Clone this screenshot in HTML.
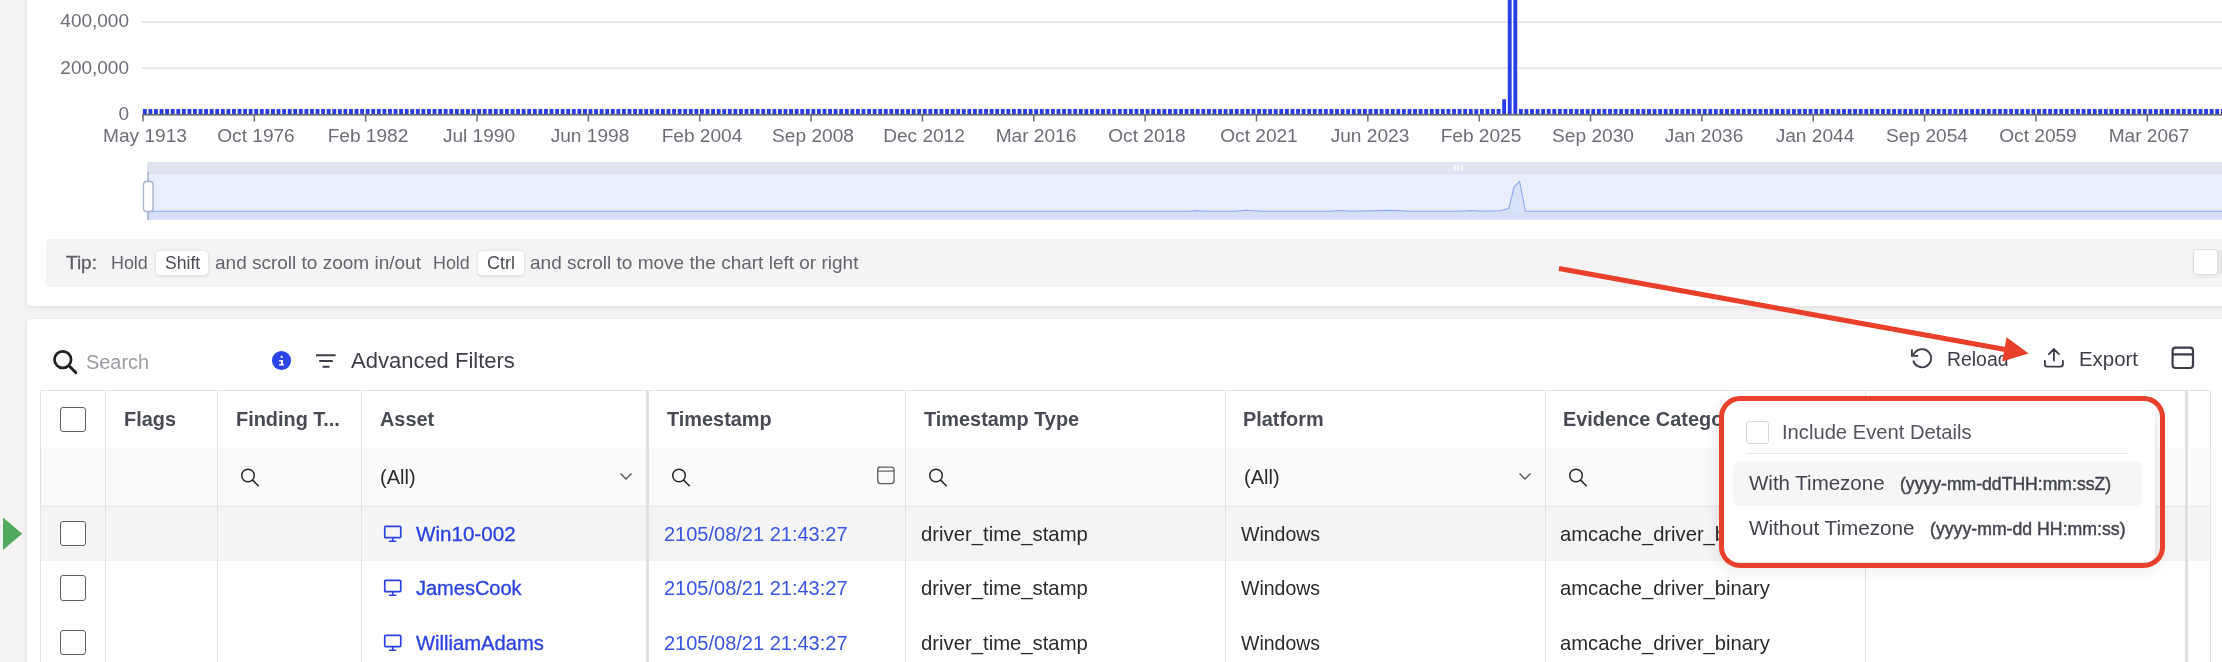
<!DOCTYPE html>
<html><head><meta charset="utf-8">
<style>
html,body{margin:0;padding:0;}
html{width:2222px;height:662px;overflow:hidden;background:#f3f3f3;}
body{width:2222px;height:662px;overflow:hidden;position:relative;background:#f3f3f3;font-family:"Liberation Sans",sans-serif;}
.abs{position:absolute;}
.yl,.xl,.tt,.th,.td,.abs{will-change:transform;}
.card{position:absolute;background:#fff;border-radius:4px;box-shadow:0 2px 6px rgba(0,0,0,0.08);}
.yl{position:absolute;width:100px;text-align:right;font-size:19px;color:#6c6f77;line-height:20px;}
.xl{position:absolute;top:125px;width:120px;text-align:center;font-size:19.1px;color:#6c6f77;line-height:22px;white-space:nowrap;}
.tip{position:absolute;left:46px;top:239px;width:2200px;height:48px;background:#f4f4f5;border-radius:4px;}
.tt{position:absolute;top:0;line-height:48px;font-size:19px;color:#62656c;white-space:nowrap;}
.kbd{position:absolute;top:10.5px;height:26.5px;background:#fff;border-radius:5px;box-sizing:border-box;border:1px solid #e8e8e8;box-shadow:0 1px 2px rgba(0,0,0,0.10);}
.th{position:absolute;top:391px;height:57px;line-height:57px;font-size:19.9px;font-weight:bold;color:#484b53;white-space:nowrap;}
.vb{position:absolute;width:1px;background:#e2e2e2;}
.cb{position:absolute;width:25.6px;height:25.4px;box-sizing:border-box;border:1.5px solid #5f5f5f;border-radius:3px;background:#fff;}
.td{position:absolute;font-size:20px;color:#2a2a2a;white-space:nowrap;line-height:24px;}
.lnk{color:#2941e2;-webkit-text-stroke:0.3px #2941e2;}
.ts{color:#3b55e3;}
</style></head><body><div id="root" style="position:absolute;left:0;top:0;width:2222px;height:662px;overflow:hidden;">
<!-- chart card -->
<div class="card" style="left:27px;top:-20px;width:2240px;height:326px;"></div>
<div class="yl" style="left:28.5px;top:11px;">400,000</div>
<div class="yl" style="left:28.5px;top:58px;">200,000</div>
<div class="yl" style="left:28.5px;top:104px;">0</div>
<svg class="abs" style="left:0;top:0" width="2222" height="160">
<rect x="142" y="21.5" width="2080" height="1.3" fill="#dcdcdc"/>
<rect x="142" y="67.5" width="2080" height="1.3" fill="#dcdcdc"/>
<g fill="#2a3de6"><rect x="142.90" y="109.00" width="3.85" height="5"/><rect x="148.47" y="109.00" width="3.85" height="5"/><rect x="154.04" y="109.00" width="3.85" height="5"/><rect x="159.61" y="109.00" width="3.85" height="5"/><rect x="165.18" y="109.00" width="3.85" height="5"/><rect x="170.75" y="109.00" width="3.85" height="5"/><rect x="176.33" y="109.00" width="3.85" height="5"/><rect x="181.90" y="109.00" width="3.85" height="5"/><rect x="187.47" y="109.00" width="3.85" height="5"/><rect x="193.04" y="109.00" width="3.85" height="5"/><rect x="198.61" y="109.00" width="3.85" height="5"/><rect x="204.18" y="109.00" width="3.85" height="5"/><rect x="209.75" y="109.00" width="3.85" height="5"/><rect x="215.32" y="109.00" width="3.85" height="5"/><rect x="220.89" y="109.00" width="3.85" height="5"/><rect x="226.47" y="109.00" width="3.85" height="5"/><rect x="232.04" y="109.00" width="3.85" height="5"/><rect x="237.61" y="109.00" width="3.85" height="5"/><rect x="243.18" y="109.00" width="3.85" height="5"/><rect x="248.75" y="109.00" width="3.85" height="5"/><rect x="254.32" y="109.00" width="3.85" height="5"/><rect x="259.89" y="109.00" width="3.85" height="5"/><rect x="265.46" y="109.00" width="3.85" height="5"/><rect x="271.03" y="109.00" width="3.85" height="5"/><rect x="276.60" y="109.00" width="3.85" height="5"/><rect x="282.18" y="109.00" width="3.85" height="5"/><rect x="287.75" y="109.00" width="3.85" height="5"/><rect x="293.32" y="109.00" width="3.85" height="5"/><rect x="298.89" y="109.00" width="3.85" height="5"/><rect x="304.46" y="109.00" width="3.85" height="5"/><rect x="310.03" y="109.00" width="3.85" height="5"/><rect x="315.60" y="109.00" width="3.85" height="5"/><rect x="321.17" y="109.00" width="3.85" height="5"/><rect x="326.74" y="109.00" width="3.85" height="5"/><rect x="332.31" y="109.00" width="3.85" height="5"/><rect x="337.88" y="109.00" width="3.85" height="5"/><rect x="343.46" y="109.00" width="3.85" height="5"/><rect x="349.03" y="109.00" width="3.85" height="5"/><rect x="354.60" y="109.00" width="3.85" height="5"/><rect x="360.17" y="109.00" width="3.85" height="5"/><rect x="365.74" y="109.00" width="3.85" height="5"/><rect x="371.31" y="109.00" width="3.85" height="5"/><rect x="376.88" y="109.00" width="3.85" height="5"/><rect x="382.45" y="109.00" width="3.85" height="5"/><rect x="388.02" y="109.00" width="3.85" height="5"/><rect x="393.60" y="109.00" width="3.85" height="5"/><rect x="399.17" y="109.00" width="3.85" height="5"/><rect x="404.74" y="109.00" width="3.85" height="5"/><rect x="410.31" y="109.00" width="3.85" height="5"/><rect x="415.88" y="109.00" width="3.85" height="5"/><rect x="421.45" y="109.00" width="3.85" height="5"/><rect x="427.02" y="109.00" width="3.85" height="5"/><rect x="432.59" y="109.00" width="3.85" height="5"/><rect x="438.16" y="109.00" width="3.85" height="5"/><rect x="443.73" y="109.00" width="3.85" height="5"/><rect x="449.30" y="109.00" width="3.85" height="5"/><rect x="454.88" y="109.00" width="3.85" height="5"/><rect x="460.45" y="109.00" width="3.85" height="5"/><rect x="466.02" y="109.00" width="3.85" height="5"/><rect x="471.59" y="109.00" width="3.85" height="5"/><rect x="477.16" y="109.00" width="3.85" height="5"/><rect x="482.73" y="109.00" width="3.85" height="5"/><rect x="488.30" y="109.00" width="3.85" height="5"/><rect x="493.87" y="109.00" width="3.85" height="5"/><rect x="499.44" y="109.00" width="3.85" height="5"/><rect x="505.01" y="109.00" width="3.85" height="5"/><rect x="510.59" y="109.00" width="3.85" height="5"/><rect x="516.16" y="109.00" width="3.85" height="5"/><rect x="521.73" y="109.00" width="3.85" height="5"/><rect x="527.30" y="109.00" width="3.85" height="5"/><rect x="532.87" y="109.00" width="3.85" height="5"/><rect x="538.44" y="109.00" width="3.85" height="5"/><rect x="544.01" y="109.00" width="3.85" height="5"/><rect x="549.58" y="109.00" width="3.85" height="5"/><rect x="555.15" y="109.00" width="3.85" height="5"/><rect x="560.73" y="109.00" width="3.85" height="5"/><rect x="566.30" y="109.00" width="3.85" height="5"/><rect x="571.87" y="109.00" width="3.85" height="5"/><rect x="577.44" y="109.00" width="3.85" height="5"/><rect x="583.01" y="109.00" width="3.85" height="5"/><rect x="588.58" y="109.00" width="3.85" height="5"/><rect x="594.15" y="109.00" width="3.85" height="5"/><rect x="599.72" y="109.00" width="3.85" height="5"/><rect x="605.29" y="109.00" width="3.85" height="5"/><rect x="610.86" y="109.00" width="3.85" height="5"/><rect x="616.43" y="109.00" width="3.85" height="5"/><rect x="622.01" y="109.00" width="3.85" height="5"/><rect x="627.58" y="109.00" width="3.85" height="5"/><rect x="633.15" y="109.00" width="3.85" height="5"/><rect x="638.72" y="109.00" width="3.85" height="5"/><rect x="644.29" y="109.00" width="3.85" height="5"/><rect x="649.86" y="109.00" width="3.85" height="5"/><rect x="655.43" y="109.00" width="3.85" height="5"/><rect x="661.00" y="109.00" width="3.85" height="5"/><rect x="666.57" y="109.00" width="3.85" height="5"/><rect x="672.14" y="109.00" width="3.85" height="5"/><rect x="677.72" y="109.00" width="3.85" height="5"/><rect x="683.29" y="109.00" width="3.85" height="5"/><rect x="688.86" y="109.00" width="3.85" height="5"/><rect x="694.43" y="109.00" width="3.85" height="5"/><rect x="700.00" y="109.00" width="3.85" height="5"/><rect x="705.57" y="109.00" width="3.85" height="5"/><rect x="711.14" y="109.00" width="3.85" height="5"/><rect x="716.71" y="109.00" width="3.85" height="5"/><rect x="722.28" y="109.00" width="3.85" height="5"/><rect x="727.85" y="109.00" width="3.85" height="5"/><rect x="733.43" y="109.00" width="3.85" height="5"/><rect x="739.00" y="109.00" width="3.85" height="5"/><rect x="744.57" y="109.00" width="3.85" height="5"/><rect x="750.14" y="109.00" width="3.85" height="5"/><rect x="755.71" y="109.00" width="3.85" height="5"/><rect x="761.28" y="109.00" width="3.85" height="5"/><rect x="766.85" y="109.00" width="3.85" height="5"/><rect x="772.42" y="109.00" width="3.85" height="5"/><rect x="777.99" y="109.00" width="3.85" height="5"/><rect x="783.56" y="109.00" width="3.85" height="5"/><rect x="789.14" y="109.00" width="3.85" height="5"/><rect x="794.71" y="109.00" width="3.85" height="5"/><rect x="800.28" y="109.00" width="3.85" height="5"/><rect x="805.85" y="109.00" width="3.85" height="5"/><rect x="811.42" y="109.00" width="3.85" height="5"/><rect x="816.99" y="109.00" width="3.85" height="5"/><rect x="822.56" y="109.00" width="3.85" height="5"/><rect x="828.13" y="109.00" width="3.85" height="5"/><rect x="833.70" y="109.00" width="3.85" height="5"/><rect x="839.27" y="109.00" width="3.85" height="5"/><rect x="844.85" y="109.00" width="3.85" height="5"/><rect x="850.42" y="109.00" width="3.85" height="5"/><rect x="855.99" y="109.00" width="3.85" height="5"/><rect x="861.56" y="109.00" width="3.85" height="5"/><rect x="867.13" y="109.00" width="3.85" height="5"/><rect x="872.70" y="109.00" width="3.85" height="5"/><rect x="878.27" y="109.00" width="3.85" height="5"/><rect x="883.84" y="109.00" width="3.85" height="5"/><rect x="889.41" y="109.00" width="3.85" height="5"/><rect x="894.98" y="109.00" width="3.85" height="5"/><rect x="900.56" y="109.00" width="3.85" height="5"/><rect x="906.13" y="109.00" width="3.85" height="5"/><rect x="911.70" y="109.00" width="3.85" height="5"/><rect x="917.27" y="109.00" width="3.85" height="5"/><rect x="922.84" y="109.00" width="3.85" height="5"/><rect x="928.41" y="109.00" width="3.85" height="5"/><rect x="933.98" y="109.00" width="3.85" height="5"/><rect x="939.55" y="109.00" width="3.85" height="5"/><rect x="945.12" y="109.00" width="3.85" height="5"/><rect x="950.69" y="109.00" width="3.85" height="5"/><rect x="956.27" y="109.00" width="3.85" height="5"/><rect x="961.84" y="109.00" width="3.85" height="5"/><rect x="967.41" y="109.00" width="3.85" height="5"/><rect x="972.98" y="109.00" width="3.85" height="5"/><rect x="978.55" y="109.00" width="3.85" height="5"/><rect x="984.12" y="109.00" width="3.85" height="5"/><rect x="989.69" y="109.00" width="3.85" height="5"/><rect x="995.26" y="109.00" width="3.85" height="5"/><rect x="1000.83" y="109.00" width="3.85" height="5"/><rect x="1006.40" y="109.00" width="3.85" height="5"/><rect x="1011.98" y="109.00" width="3.85" height="5"/><rect x="1017.55" y="109.00" width="3.85" height="5"/><rect x="1023.12" y="109.00" width="3.85" height="5"/><rect x="1028.69" y="109.00" width="3.85" height="5"/><rect x="1034.26" y="109.00" width="3.85" height="5"/><rect x="1039.83" y="109.00" width="3.85" height="5"/><rect x="1045.40" y="109.00" width="3.85" height="5"/><rect x="1050.97" y="109.00" width="3.85" height="5"/><rect x="1056.54" y="109.00" width="3.85" height="5"/><rect x="1062.12" y="109.00" width="3.85" height="5"/><rect x="1067.69" y="109.00" width="3.85" height="5"/><rect x="1073.26" y="109.00" width="3.85" height="5"/><rect x="1078.83" y="109.00" width="3.85" height="5"/><rect x="1084.40" y="109.00" width="3.85" height="5"/><rect x="1089.97" y="109.00" width="3.85" height="5"/><rect x="1095.54" y="109.00" width="3.85" height="5"/><rect x="1101.11" y="109.00" width="3.85" height="5"/><rect x="1106.68" y="109.00" width="3.85" height="5"/><rect x="1112.25" y="109.00" width="3.85" height="5"/><rect x="1117.83" y="109.00" width="3.85" height="5"/><rect x="1123.40" y="109.00" width="3.85" height="5"/><rect x="1128.97" y="109.00" width="3.85" height="5"/><rect x="1134.54" y="109.00" width="3.85" height="5"/><rect x="1140.11" y="109.00" width="3.85" height="5"/><rect x="1145.68" y="109.00" width="3.85" height="5"/><rect x="1151.25" y="109.00" width="3.85" height="5"/><rect x="1156.82" y="109.00" width="3.85" height="5"/><rect x="1162.39" y="109.00" width="3.85" height="5"/><rect x="1167.96" y="109.00" width="3.85" height="5"/><rect x="1173.54" y="109.00" width="3.85" height="5"/><rect x="1179.11" y="109.00" width="3.85" height="5"/><rect x="1184.68" y="109.00" width="3.85" height="5"/><rect x="1190.25" y="109.00" width="3.85" height="5"/><rect x="1195.82" y="109.00" width="3.85" height="5"/><rect x="1201.39" y="109.00" width="3.85" height="5"/><rect x="1206.96" y="109.00" width="3.85" height="5"/><rect x="1212.53" y="109.00" width="3.85" height="5"/><rect x="1218.10" y="109.00" width="3.85" height="5"/><rect x="1223.67" y="109.00" width="3.85" height="5"/><rect x="1229.25" y="109.00" width="3.85" height="5"/><rect x="1234.82" y="109.00" width="3.85" height="5"/><rect x="1240.39" y="109.00" width="3.85" height="5"/><rect x="1245.96" y="109.00" width="3.85" height="5"/><rect x="1251.53" y="109.00" width="3.85" height="5"/><rect x="1257.10" y="109.00" width="3.85" height="5"/><rect x="1262.67" y="109.00" width="3.85" height="5"/><rect x="1268.24" y="109.00" width="3.85" height="5"/><rect x="1273.81" y="109.00" width="3.85" height="5"/><rect x="1279.38" y="109.00" width="3.85" height="5"/><rect x="1284.95" y="109.00" width="3.85" height="5"/><rect x="1290.53" y="109.00" width="3.85" height="5"/><rect x="1296.10" y="109.00" width="3.85" height="5"/><rect x="1301.67" y="109.00" width="3.85" height="5"/><rect x="1307.24" y="109.00" width="3.85" height="5"/><rect x="1312.81" y="109.00" width="3.85" height="5"/><rect x="1318.38" y="109.00" width="3.85" height="5"/><rect x="1323.95" y="109.00" width="3.85" height="5"/><rect x="1329.52" y="109.00" width="3.85" height="5"/><rect x="1335.09" y="109.00" width="3.85" height="5"/><rect x="1340.66" y="109.00" width="3.85" height="5"/><rect x="1346.24" y="109.00" width="3.85" height="5"/><rect x="1351.81" y="109.00" width="3.85" height="5"/><rect x="1357.38" y="109.00" width="3.85" height="5"/><rect x="1362.95" y="109.00" width="3.85" height="5"/><rect x="1368.52" y="109.00" width="3.85" height="5"/><rect x="1374.09" y="109.00" width="3.85" height="5"/><rect x="1379.66" y="109.00" width="3.85" height="5"/><rect x="1385.23" y="109.00" width="3.85" height="5"/><rect x="1390.80" y="109.00" width="3.85" height="5"/><rect x="1396.38" y="109.00" width="3.85" height="5"/><rect x="1401.95" y="109.00" width="3.85" height="5"/><rect x="1407.52" y="109.00" width="3.85" height="5"/><rect x="1413.09" y="109.00" width="3.85" height="5"/><rect x="1418.66" y="109.00" width="3.85" height="5"/><rect x="1424.23" y="109.00" width="3.85" height="5"/><rect x="1429.80" y="109.00" width="3.85" height="5"/><rect x="1435.37" y="109.00" width="3.85" height="5"/><rect x="1440.94" y="109.00" width="3.85" height="5"/><rect x="1446.51" y="109.00" width="3.85" height="5"/><rect x="1452.09" y="109.00" width="3.85" height="5"/><rect x="1457.66" y="109.00" width="3.85" height="5"/><rect x="1463.23" y="109.00" width="3.85" height="5"/><rect x="1468.80" y="109.00" width="3.85" height="5"/><rect x="1474.37" y="109.00" width="3.85" height="5"/><rect x="1479.94" y="109.00" width="3.85" height="5"/><rect x="1485.51" y="109.00" width="3.85" height="5"/><rect x="1491.08" y="109.00" width="3.85" height="5"/><rect x="1496.65" y="109.00" width="3.85" height="5"/><rect x="1502.22" y="99.30" width="3.85" height="14.7"/><rect x="1507.80" y="-16.00" width="3.85" height="130"/><rect x="1513.37" y="-16.00" width="3.85" height="130"/><rect x="1518.94" y="109.00" width="3.85" height="5"/><rect x="1524.51" y="109.00" width="3.85" height="5"/><rect x="1530.08" y="109.00" width="3.85" height="5"/><rect x="1535.65" y="109.00" width="3.85" height="5"/><rect x="1541.22" y="109.00" width="3.85" height="5"/><rect x="1546.79" y="109.00" width="3.85" height="5"/><rect x="1552.36" y="109.00" width="3.85" height="5"/><rect x="1557.93" y="109.00" width="3.85" height="5"/><rect x="1563.51" y="109.00" width="3.85" height="5"/><rect x="1569.08" y="109.00" width="3.85" height="5"/><rect x="1574.65" y="109.00" width="3.85" height="5"/><rect x="1580.22" y="109.00" width="3.85" height="5"/><rect x="1585.79" y="109.00" width="3.85" height="5"/><rect x="1591.36" y="109.00" width="3.85" height="5"/><rect x="1596.93" y="109.00" width="3.85" height="5"/><rect x="1602.50" y="109.00" width="3.85" height="5"/><rect x="1608.07" y="109.00" width="3.85" height="5"/><rect x="1613.64" y="109.00" width="3.85" height="5"/><rect x="1619.21" y="109.00" width="3.85" height="5"/><rect x="1624.79" y="109.00" width="3.85" height="5"/><rect x="1630.36" y="109.00" width="3.85" height="5"/><rect x="1635.93" y="109.00" width="3.85" height="5"/><rect x="1641.50" y="109.00" width="3.85" height="5"/><rect x="1647.07" y="109.00" width="3.85" height="5"/><rect x="1652.64" y="109.00" width="3.85" height="5"/><rect x="1658.21" y="109.00" width="3.85" height="5"/><rect x="1663.78" y="109.00" width="3.85" height="5"/><rect x="1669.35" y="109.00" width="3.85" height="5"/><rect x="1674.92" y="109.00" width="3.85" height="5"/><rect x="1680.50" y="109.00" width="3.85" height="5"/><rect x="1686.07" y="109.00" width="3.85" height="5"/><rect x="1691.64" y="109.00" width="3.85" height="5"/><rect x="1697.21" y="109.00" width="3.85" height="5"/><rect x="1702.78" y="109.00" width="3.85" height="5"/><rect x="1708.35" y="109.00" width="3.85" height="5"/><rect x="1713.92" y="109.00" width="3.85" height="5"/><rect x="1719.49" y="109.00" width="3.85" height="5"/><rect x="1725.06" y="109.00" width="3.85" height="5"/><rect x="1730.63" y="109.00" width="3.85" height="5"/><rect x="1736.21" y="109.00" width="3.85" height="5"/><rect x="1741.78" y="109.00" width="3.85" height="5"/><rect x="1747.35" y="109.00" width="3.85" height="5"/><rect x="1752.92" y="109.00" width="3.85" height="5"/><rect x="1758.49" y="109.00" width="3.85" height="5"/><rect x="1764.06" y="109.00" width="3.85" height="5"/><rect x="1769.63" y="109.00" width="3.85" height="5"/><rect x="1775.20" y="109.00" width="3.85" height="5"/><rect x="1780.77" y="109.00" width="3.85" height="5"/><rect x="1786.35" y="109.00" width="3.85" height="5"/><rect x="1791.92" y="109.00" width="3.85" height="5"/><rect x="1797.49" y="109.00" width="3.85" height="5"/><rect x="1803.06" y="109.00" width="3.85" height="5"/><rect x="1808.63" y="109.00" width="3.85" height="5"/><rect x="1814.20" y="109.00" width="3.85" height="5"/><rect x="1819.77" y="109.00" width="3.85" height="5"/><rect x="1825.34" y="109.00" width="3.85" height="5"/><rect x="1830.91" y="109.00" width="3.85" height="5"/><rect x="1836.48" y="109.00" width="3.85" height="5"/><rect x="1842.06" y="109.00" width="3.85" height="5"/><rect x="1847.63" y="109.00" width="3.85" height="5"/><rect x="1853.20" y="109.00" width="3.85" height="5"/><rect x="1858.77" y="109.00" width="3.85" height="5"/><rect x="1864.34" y="109.00" width="3.85" height="5"/><rect x="1869.91" y="109.00" width="3.85" height="5"/><rect x="1875.48" y="109.00" width="3.85" height="5"/><rect x="1881.05" y="109.00" width="3.85" height="5"/><rect x="1886.62" y="109.00" width="3.85" height="5"/><rect x="1892.19" y="109.00" width="3.85" height="5"/><rect x="1897.77" y="109.00" width="3.85" height="5"/><rect x="1903.34" y="109.00" width="3.85" height="5"/><rect x="1908.91" y="109.00" width="3.85" height="5"/><rect x="1914.48" y="109.00" width="3.85" height="5"/><rect x="1920.05" y="109.00" width="3.85" height="5"/><rect x="1925.62" y="109.00" width="3.85" height="5"/><rect x="1931.19" y="109.00" width="3.85" height="5"/><rect x="1936.76" y="109.00" width="3.85" height="5"/><rect x="1942.33" y="109.00" width="3.85" height="5"/><rect x="1947.90" y="109.00" width="3.85" height="5"/><rect x="1953.47" y="109.00" width="3.85" height="5"/><rect x="1959.05" y="109.00" width="3.85" height="5"/><rect x="1964.62" y="109.00" width="3.85" height="5"/><rect x="1970.19" y="109.00" width="3.85" height="5"/><rect x="1975.76" y="109.00" width="3.85" height="5"/><rect x="1981.33" y="109.00" width="3.85" height="5"/><rect x="1986.90" y="109.00" width="3.85" height="5"/><rect x="1992.47" y="109.00" width="3.85" height="5"/><rect x="1998.04" y="109.00" width="3.85" height="5"/><rect x="2003.61" y="109.00" width="3.85" height="5"/><rect x="2009.18" y="109.00" width="3.85" height="5"/><rect x="2014.76" y="109.00" width="3.85" height="5"/><rect x="2020.33" y="109.00" width="3.85" height="5"/><rect x="2025.90" y="109.00" width="3.85" height="5"/><rect x="2031.47" y="109.00" width="3.85" height="5"/><rect x="2037.04" y="109.00" width="3.85" height="5"/><rect x="2042.61" y="109.00" width="3.85" height="5"/><rect x="2048.18" y="109.00" width="3.85" height="5"/><rect x="2053.75" y="109.00" width="3.85" height="5"/><rect x="2059.32" y="109.00" width="3.85" height="5"/><rect x="2064.89" y="109.00" width="3.85" height="5"/><rect x="2070.47" y="109.00" width="3.85" height="5"/><rect x="2076.04" y="109.00" width="3.85" height="5"/><rect x="2081.61" y="109.00" width="3.85" height="5"/><rect x="2087.18" y="109.00" width="3.85" height="5"/><rect x="2092.75" y="109.00" width="3.85" height="5"/><rect x="2098.32" y="109.00" width="3.85" height="5"/><rect x="2103.89" y="109.00" width="3.85" height="5"/><rect x="2109.46" y="109.00" width="3.85" height="5"/><rect x="2115.03" y="109.00" width="3.85" height="5"/><rect x="2120.61" y="109.00" width="3.85" height="5"/><rect x="2126.18" y="109.00" width="3.85" height="5"/><rect x="2131.75" y="109.00" width="3.85" height="5"/><rect x="2137.32" y="109.00" width="3.85" height="5"/><rect x="2142.89" y="109.00" width="3.85" height="5"/><rect x="2148.46" y="109.00" width="3.85" height="5"/><rect x="2154.03" y="109.00" width="3.85" height="5"/><rect x="2159.60" y="109.00" width="3.85" height="5"/><rect x="2165.17" y="109.00" width="3.85" height="5"/><rect x="2170.74" y="109.00" width="3.85" height="5"/><rect x="2176.32" y="109.00" width="3.85" height="5"/><rect x="2181.89" y="109.00" width="3.85" height="5"/><rect x="2187.46" y="109.00" width="3.85" height="5"/><rect x="2193.03" y="109.00" width="3.85" height="5"/><rect x="2198.60" y="109.00" width="3.85" height="5"/><rect x="2204.17" y="109.00" width="3.85" height="5"/><rect x="2209.74" y="109.00" width="3.85" height="5"/><rect x="2215.31" y="109.00" width="3.85" height="5"/><rect x="2220.88" y="109.00" width="3.85" height="5"/></g>
<rect x="142" y="114" width="2080" height="1.6" fill="#6b6e75"/>
<g fill="#6b6e75"><rect x="142.25" y="114" width="1.5" height="7.5"/><rect x="253.60" y="114" width="1.5" height="7.5"/><rect x="364.95" y="114" width="1.5" height="7.5"/><rect x="476.30" y="114" width="1.5" height="7.5"/><rect x="587.65" y="114" width="1.5" height="7.5"/><rect x="699.00" y="114" width="1.5" height="7.5"/><rect x="810.35" y="114" width="1.5" height="7.5"/><rect x="921.70" y="114" width="1.5" height="7.5"/><rect x="1033.05" y="114" width="1.5" height="7.5"/><rect x="1144.40" y="114" width="1.5" height="7.5"/><rect x="1255.75" y="114" width="1.5" height="7.5"/><rect x="1367.10" y="114" width="1.5" height="7.5"/><rect x="1478.45" y="114" width="1.5" height="7.5"/><rect x="1589.80" y="114" width="1.5" height="7.5"/><rect x="1701.15" y="114" width="1.5" height="7.5"/><rect x="1812.50" y="114" width="1.5" height="7.5"/><rect x="1923.85" y="114" width="1.5" height="7.5"/><rect x="2035.20" y="114" width="1.5" height="7.5"/><rect x="2146.55" y="114" width="1.5" height="7.5"/></g>
</svg>
<div class="xl" style="left:85.00px">May 1913</div><div class="xl" style="left:196.35px">Oct 1976</div><div class="xl" style="left:307.70px">Feb 1982</div><div class="xl" style="left:419.05px">Jul 1990</div><div class="xl" style="left:530.40px">Jun 1998</div><div class="xl" style="left:641.75px">Feb 2004</div><div class="xl" style="left:753.10px">Sep 2008</div><div class="xl" style="left:864.45px">Dec 2012</div><div class="xl" style="left:975.80px">Mar 2016</div><div class="xl" style="left:1087.15px">Oct 2018</div><div class="xl" style="left:1198.50px">Oct 2021</div><div class="xl" style="left:1309.85px">Jun 2023</div><div class="xl" style="left:1421.20px">Feb 2025</div><div class="xl" style="left:1532.55px">Sep 2030</div><div class="xl" style="left:1643.90px">Jan 2036</div><div class="xl" style="left:1755.25px">Jan 2044</div><div class="xl" style="left:1866.60px">Sep 2054</div><div class="xl" style="left:1977.95px">Oct 2059</div><div class="xl" style="left:2089.30px">Mar 2067</div>
<!-- navigator -->
<svg class="abs" style="left:0;top:150px" width="2222" height="80">
<rect x="147" y="12" width="2080" height="11.2" fill="#dfe4f0" rx="2"/>
<rect x="147" y="23" width="2080" height="1.3" fill="#d5dbe9"/>
<rect x="147" y="24.3" width="2080" height="37" fill="#e8eefd"/>
<rect x="147" y="61" width="2080" height="8.8" fill="#d7e0f8"/>
<path d="M147 61.2 L1190 61.2 L1196 60.6 L1204 61.2 L1236 61.2 L1246 60.2 L1262 61.2 L1330 61.2 L1340 60.5 L1352 61.2 L1390 60.4 L1410 61.2 L1460 61.2 L1470 60.5 L1484 61.2 L1500 60.8 L1508.8 58.5 L1514.2 36.9 L1519.6 31.5 L1525.4 61.2 L2222 61.2" fill="#d9e2fa" stroke="#8fa9f3" stroke-width="1.1"/>
<rect x="147.3" y="22" width="1.5" height="48" fill="#a7b3cc"/>
<rect x="143.5" y="31.5" width="9.5" height="30" rx="3" fill="#fff" stroke="#a7b3cc" stroke-width="1.3"/>
<g fill="#fff"><rect x="1454" y="15.3" width="1.6" height="5"/><rect x="1457.5" y="15.3" width="1.6" height="5"/><rect x="1461" y="15.3" width="1.6" height="5"/></g>
</svg>
<!-- tip -->
<div class="tip">
 <div class="tt" style="left:20px;color:#5d6067;-webkit-text-stroke:0.35px #5d6067;">Tip:</div>
 <div class="tt" style="left:64.5px;font-size:17.9px;">Hold</div>
 <div class="kbd" style="left:108.5px;width:54.5px;"></div>
 <div class="tt" style="left:118.5px;color:#4a4d54;font-size:17.6px;">Shift</div>
 <div class="tt" style="left:169px;">and scroll to zoom in/out</div>
 <div class="tt" style="left:387px;font-size:17.9px;">Hold</div>
 <div class="kbd" style="left:431px;width:47.5px;"></div>
 <div class="tt" style="left:441px;color:#4a4d54;font-size:18px;">Ctrl</div>
 <div class="tt" style="left:484px;">and scroll to move the chart left or right</div>
 <div class="kbd" style="left:2147px;width:25px;height:25.5px;top:10px;box-sizing:border-box;border:1px solid #dedede;box-shadow:0 2px 4px rgba(0,0,0,0.06);border-radius:4px;"></div><div class="abs" style="left:2172px;top:11px;width:10px;height:24px;background:#e6e6e6;"></div>
</div>
<!-- table card -->
<div class="card" style="left:27px;top:319px;width:2240px;height:400px;"></div>
<!-- toolbar -->
<svg class="abs" style="left:50px;top:346px" width="32" height="32" viewBox="0 0 32 32"><circle cx="12.8" cy="13.6" r="8.3" fill="none" stroke="#222" stroke-width="2.7"/><path d="M19 19.8 L25.8 26.6" stroke="#222" stroke-width="2.9" stroke-linecap="round"/></svg>
<div class="abs" style="left:86px;top:350px;font-size:19.9px;color:#9b9da3;line-height:24px;">Search</div>
<svg class="abs" style="left:271px;top:350px" width="21" height="21" viewBox="0 0 21 21"><circle cx="10.5" cy="10.5" r="9.6" fill="#2c46ea"/><circle cx="10.6" cy="6.9" r="1.15" fill="#fff"/><path d="M8.1 9.9 H12 V14.1 H12.9 V15.5 H8.1 V14.1 H10 V11.6 H8.1Z" fill="#fff"/></svg>
<svg class="abs" style="left:314px;top:352px" width="24" height="18" viewBox="0 0 24 18"><path d="M2 3.3 H21.6 M5.2 9 H18.8 M8.6 14.8 H15.5" stroke="#3b3e46" stroke-width="2" /></svg>
<div class="abs" style="left:351px;top:349px;font-size:22px;color:#3c3f48;line-height:24px;">Advanced Filters</div>

<svg class="abs" style="left:1908px;top:345px" width="26" height="26" viewBox="0 0 26 26"><path d="M5.2 15.4 A9.1 9.1 0 1 0 7.2 7.2 L4.6 10.4" fill="none" stroke="#3c3f48" stroke-width="1.9"/><path d="M3.9 4.6 V10.9 H10.2" fill="none" stroke="#3c3f48" stroke-width="1.9"/></svg>
<div class="abs" style="left:1947px;top:347px;font-size:19.4px;color:#3c3f48;line-height:24px;">Reload</div>
<svg class="abs" style="left:2042px;top:346px" width="24" height="24" viewBox="0 0 24 24"><path d="M11.9 14.6 V3.2 M6.9 8.2 L11.9 3.0 L16.9 8.2 M2.9 15 V18.2 Q2.9 20.6 5.3 20.6 H18.5 Q20.9 20.6 20.9 18.2 V15" fill="none" stroke="#3c3f48" stroke-width="1.85" stroke-linecap="round"/></svg>
<div class="abs" style="left:2079px;top:347px;font-size:20.4px;color:#3c3f48;line-height:24px;">Export</div>
<svg class="abs" style="left:2170px;top:345px" width="26" height="26" viewBox="0 0 26 26"><rect x="2.6" y="2.6" width="20.4" height="20.4" rx="3" fill="none" stroke="#3c3f48" stroke-width="2.2"/><path d="M2.6 9.4 H23" stroke="#3c3f48" stroke-width="2.3"/></svg>

<!-- table -->
<div class="abs" style="left:40px;top:390px;width:2171px;height:300px;border:1px solid #e2e2e2;border-bottom:none;box-sizing:border-box;background:#fff;"></div>
<div class="abs" style="left:41px;top:448px;width:2169px;height:58px;background:#fafafa;"></div>
<div class="abs" style="left:41px;top:506px;width:2169px;height:1px;background:#e4e6ea;"></div>
<div class="abs" style="left:41px;top:507px;width:2169px;height:54px;background:#f4f4f4;"></div>
<div class="vb" style="left:105px;top:391px;height:280px;"></div>
<div class="vb" style="left:217px;top:391px;height:280px;"></div>
<div class="vb" style="left:361px;top:391px;height:280px;"></div>
<div class="abs" style="left:646px;top:391px;width:3px;height:280px;background:#e0e0e0;"></div>
<div class="vb" style="left:905px;top:391px;height:280px;"></div>
<div class="vb" style="left:1225px;top:391px;height:280px;"></div>
<div class="vb" style="left:1545px;top:391px;height:280px;"></div>
<div class="vb" style="left:1865px;top:391px;height:280px;"></div>
<div class="abs" style="left:2185px;top:391px;width:3px;height:280px;background:#e0e0e0;"></div>

<div class="cb" style="left:60.2px;top:407.1px;height:24.6px;"></div>
<div class="th" style="left:124px;">Flags</div>
<div class="th" style="left:235.5px;">Finding T...</div>
<div class="th" style="left:380px;">Asset</div>
<div class="th" style="left:667px;">Timestamp</div>
<div class="th" style="left:924px;">Timestamp Type</div>
<div class="th" style="left:1243px;">Platform</div>
<div class="th" style="left:1563px;">Evidence Category</div>

<!-- filter row -->
<svg class="abs" style="left:239px;top:466px" width="24" height="24" viewBox="0 0 24 24"><circle cx="9" cy="9.5" r="6.3" fill="none" stroke="#262626" stroke-width="1.5"/><path d="M13.6 14.1 L19.3 19.8" stroke="#262626" stroke-width="1.5" stroke-linecap="round"/></svg>
<div class="td" style="left:380px;top:465px;">(All)</div>
<svg class="abs" style="left:618px;top:468px" width="16" height="16" viewBox="0 0 16 16"><path d="M2.5 5.5 L8 11 L13.5 5.5" fill="none" stroke="#555" stroke-width="1.4"/></svg>
<svg class="abs" style="left:670.1px;top:466px" width="24" height="24" viewBox="0 0 24 24"><circle cx="9" cy="9.5" r="6.3" fill="none" stroke="#262626" stroke-width="1.5"/><path d="M13.6 14.1 L19.3 19.8" stroke="#262626" stroke-width="1.5" stroke-linecap="round"/></svg>
<svg class="abs" style="left:875px;top:465px" width="22" height="22" viewBox="0 0 22 22"><rect x="2.75" y="2.05" width="16.3" height="16.5" rx="2.8" fill="none" stroke="#5f5f5f" stroke-width="1.35"/><path d="M2.75 6.1 H19.05" stroke="#6a6a6a" stroke-width="1.3"/></svg>
<svg class="abs" style="left:927.1px;top:466px" width="24" height="24" viewBox="0 0 24 24"><circle cx="9" cy="9.5" r="6.3" fill="none" stroke="#262626" stroke-width="1.5"/><path d="M13.6 14.1 L19.3 19.8" stroke="#262626" stroke-width="1.5" stroke-linecap="round"/></svg>
<div class="td" style="left:1244px;top:465px;">(All)</div>
<svg class="abs" style="left:1517px;top:468px" width="16" height="16" viewBox="0 0 16 16"><path d="M2.5 5.5 L8 11 L13.5 5.5" fill="none" stroke="#555" stroke-width="1.4"/></svg>
<svg class="abs" style="left:1567.1px;top:466px" width="24" height="24" viewBox="0 0 24 24"><circle cx="9" cy="9.5" r="6.3" fill="none" stroke="#262626" stroke-width="1.5"/><path d="M13.6 14.1 L19.3 19.8" stroke="#262626" stroke-width="1.5" stroke-linecap="round"/></svg>

<!-- rows -->
<div class="cb" style="left:60.2px;top:520.7px;"></div>
<svg class="abs" style="left:382px;top:523.7px" width="22" height="20" viewBox="0 0 22 20"><rect x="2.75" y="2.35" width="16" height="11.3" rx="0.9" fill="none" stroke="#2b42e0" stroke-width="1.7"/><path d="M10.75 14 V16.8 M6.9 17.3 H14.3" stroke="#2b42e0" stroke-width="1.6"/></svg>
<div class="td lnk" style="left:415.5px;top:521.7px;font-size:20.6px;">Win10-002</div>
<div class="td ts" style="left:664px;top:521.7px;">2105/08/21 21:43:27</div>
<div class="td" style="left:921px;top:521.7px;font-size:20.3px;">driver_time_stamp</div>
<div class="td" style="left:1241px;top:521.7px;font-size:19.5px;">Windows</div>
<div class="td" style="left:1560px;top:521.7px;font-size:20.2px;">amcache_driver_binary</div>
<div class="cb" style="left:60.2px;top:575.2px;"></div>
<svg class="abs" style="left:382px;top:578.2px" width="22" height="20" viewBox="0 0 22 20"><rect x="2.75" y="2.35" width="16" height="11.3" rx="0.9" fill="none" stroke="#2b42e0" stroke-width="1.7"/><path d="M10.75 14 V16.8 M6.9 17.3 H14.3" stroke="#2b42e0" stroke-width="1.6"/></svg>
<div class="td lnk" style="left:415.5px;top:576.2px;font-size:20.0px;">JamesCook</div>
<div class="td ts" style="left:664px;top:576.2px;">2105/08/21 21:43:27</div>
<div class="td" style="left:921px;top:576.2px;font-size:20.3px;">driver_time_stamp</div>
<div class="td" style="left:1241px;top:576.2px;font-size:19.5px;">Windows</div>
<div class="td" style="left:1560px;top:576.2px;font-size:20.2px;">amcache_driver_binary</div>
<div class="cb" style="left:60.2px;top:629.7px;"></div>
<svg class="abs" style="left:382px;top:632.7px" width="22" height="20" viewBox="0 0 22 20"><rect x="2.75" y="2.35" width="16" height="11.3" rx="0.9" fill="none" stroke="#2b42e0" stroke-width="1.7"/><path d="M10.75 14 V16.8 M6.9 17.3 H14.3" stroke="#2b42e0" stroke-width="1.6"/></svg>
<div class="td lnk" style="left:415.5px;top:631.2px;font-size:20.2px;">WilliamAdams</div>
<div class="td ts" style="left:664px;top:631.2px;">2105/08/21 21:43:27</div>
<div class="td" style="left:921px;top:631.2px;font-size:20.3px;">driver_time_stamp</div>
<div class="td" style="left:1241px;top:631.2px;font-size:19.5px;">Windows</div>
<div class="td" style="left:1560px;top:631.2px;font-size:20.2px;">amcache_driver_binary</div>

<!-- green marker -->
<svg class="abs" style="left:0;top:515px" width="26" height="38" viewBox="0 0 26 38"><path d="M3 2.6 L22.2 18.8 L3 35.1Z" fill="#52a960"/></svg>

<!-- popup -->
<div class="abs" style="left:1720px;top:400px;width:435px;height:162px;background:#fff;border-radius:8px;box-shadow:0 6px 18px rgba(0,0,0,0.10),0 1px 4px rgba(0,0,0,0.06);"></div>
<div class="abs" style="left:1746px;top:421px;width:23px;height:23px;border:1px solid #d9d9d9;border-radius:3px;box-sizing:border-box;background:#fff;"></div>
<div class="abs" style="left:1782px;top:420px;font-size:20.2px;color:#51545c;line-height:24px;white-space:nowrap;">Include Event Details</div>
<div class="abs" style="left:1746px;top:452.5px;width:383px;height:1px;background:#e6e8eb;"></div>
<div class="abs" style="left:1733px;top:461px;width:409px;height:45px;background:#f6f6f6;border-radius:6px;"></div>
<div class="abs" style="left:1749px;top:471px;font-size:20.5px;color:#42454d;line-height:24px;white-space:nowrap;">With Timezone</div>
<div class="abs" style="left:1900px;top:473px;font-size:17.6px;color:#42454d;-webkit-text-stroke:0.45px #42454d;line-height:22px;white-space:nowrap;">(yyyy-mm-ddTHH:mm:ssZ)</div>
<div class="abs" style="left:1748.5px;top:516px;font-size:20.7px;color:#42454d;line-height:24px;white-space:nowrap;">Without Timezone</div>
<div class="abs" style="left:1930px;top:518px;font-size:17.7px;color:#42454d;-webkit-text-stroke:0.45px #42454d;line-height:22px;white-space:nowrap;">(yyyy-mm-dd HH:mm:ss)</div>
<div class="abs" style="left:1719px;top:396px;width:446px;height:172px;border:5px solid #e8402a;border-radius:21px;box-sizing:border-box;"></div>

<!-- arrow -->
<svg class="abs" style="left:0;top:0" width="2222" height="662">
<path d="M1559 268.5 L2008 350" stroke="#e8402a" stroke-width="5.2" />
<path d="M2006.6 337.2 L2028.6 353.6 L2002.1 361.6Z" fill="#e8402a"/>
</svg>

</div></body></html>
